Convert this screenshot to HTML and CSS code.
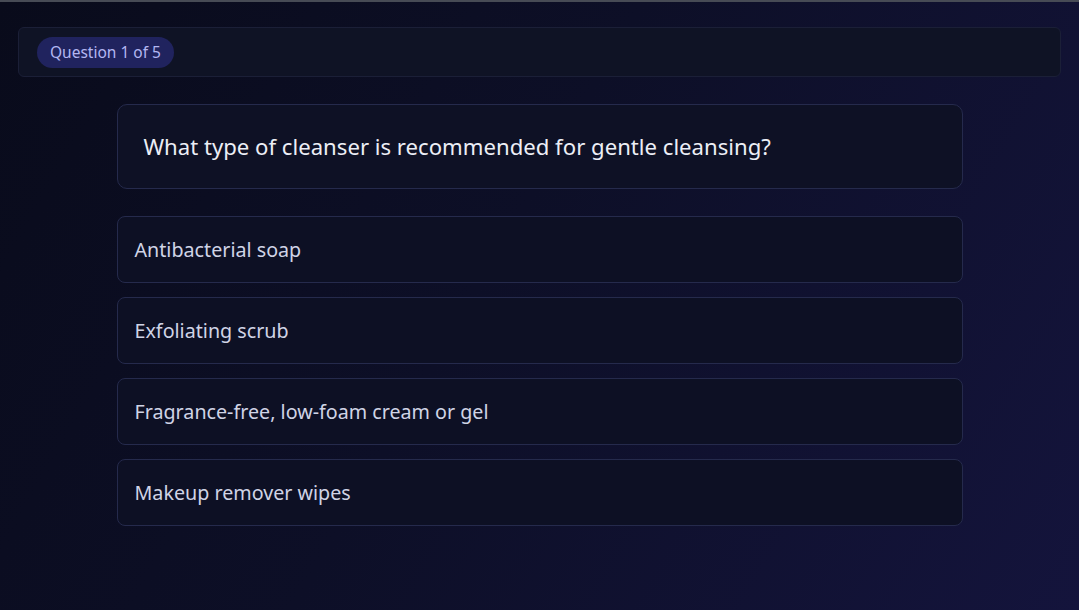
FILE: index.html
```html
<!DOCTYPE html>
<html lang="en">
<head>
<meta charset="utf-8">
<title>Quiz</title>
<link rel="stylesheet" href="styles.css">
</head>
<body>
<div class="page">
  <header class="topbar">
    <span class="badge">Question 1 of 5</span>
  </header>
  <main class="quiz">
    <div class="question">What type of cleanser is recommended for gentle cleansing?</div>
    <div class="options">
      <button class="option">Antibacterial soap</button>
      <button class="option">Exfoliating scrub</button>
      <button class="option">Fragrance-free, low-foam cream or gel</button>
      <button class="option">Makeup remover wipes</button>
    </div>
  </main>
</div>
</body>
</html>
```
FILE: styles.css
```css
html, body {
  margin: 0;
  padding: 0;
  height: 100%;
}
body {
  font-family: "Noto Sans", "Open Sans", sans-serif;
  background: linear-gradient(120deg, #090b1b 0%, #0d0f27 45%, #14143c 100%);
  border-top: 2px solid #474b55;
  box-sizing: border-box;
  overflow: hidden;
}
.page {
  padding: 25px 18px 0;
}
.topbar {
  display: flex;
  align-items: center;
  height: 48px;
  padding: 0 18px;
  background: #0f1325;
  border: 1px solid #1b1f37;
  border-radius: 6px;
}
.badge {
  display: inline-flex;
  align-items: center;
  height: 31px;
  padding: 0 13px;
  border-radius: 16px;
  background: #20235e;
  color: #b3b7f2;
  font-size: 15.5px;
}
.quiz {
  width: 846px;
  margin: 27px auto 0;
}
.question {
  box-sizing: border-box;
  height: 85px;
  display: flex;
  align-items: center;
  padding: 0 0 2px 26px;
  background: #0e1125;
  border: 1px solid #252a4c;
  border-radius: 10px;
  color: #eceef6;
  font-size: 22.15px;
  font-weight: 400;
}
.options {
  display: flex;
  flex-direction: column;
  gap: 14px;
  margin-top: 27px;
}
.option {
  box-sizing: border-box;
  height: 67px;
  display: flex;
  align-items: center;
  padding: 0 17px;
  background: #0d1024;
  border: 1px solid #252a4c;
  border-radius: 8px;
  color: #d0d4e6;
  font-family: inherit;
  font-size: 19.7px;
  text-align: left;
  cursor: pointer;
}
```
